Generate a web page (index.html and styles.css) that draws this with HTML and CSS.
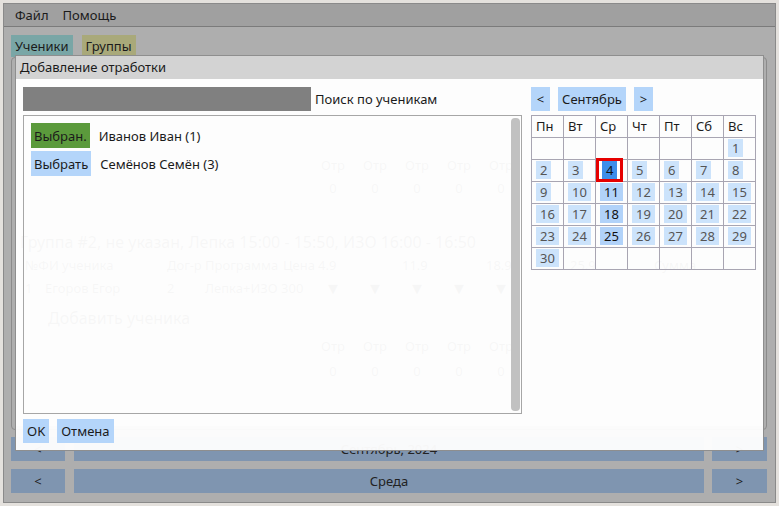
FILE: index.html
```html
<!DOCTYPE html>
<html lang="ru">
<head>
<meta charset="utf-8">
<title>Добавление отработки</title>
<link rel="stylesheet" href="styles.css">
</head>
<body>
<div class="window">
  <div class="menubar"><span>Файл</span><span>Помощь</span></div>
  <div class="main">
    <div class="tabs"><span class="tab tab-students">Ученики</span><span class="tab tab-groups">Группы</span></div>
    <div class="panel">
      <div class="ghost">
        <div class="grow g-r3 cells"><span>Отр</span><span>Отр</span><span>Отр</span><span>Отр</span><span>Отр</span></div>
        <div class="grow g-r4 cells"><span>0</span><span>0</span><span>0</span><span>0</span><span>0</span></div>
        <div class="grow g-r5 gtitle">Группа #2, не указан, Лепка 15:00 - 15:50, ИЗО 16:00 - 16:50</div>
        <div class="grow g-r6 ghead"><span>№ФИ ученика</span><span>Дог-р</span><span>Программа</span><span>Цена</span><span>4.9</span><span>11.9</span><span>18.9</span><span>25.9</span><span>Сумма</span></div>
        <div class="grow g-r7 gdata"><span>1</span><span>Егоров Егор</span><span>2</span><span>Лепка+ИЗО 300</span><span class="dd">▼</span><span class="dd">▼</span><span class="dd">▼</span><span class="dd">▼</span><span class="dd">▼</span></div>
        <div class="grow g-r8 gadd">Добавить ученика</div>
        <div class="grow g-r9 cells"><span>Отр</span><span>Отр</span><span>Отр</span><span>Отр</span><span>Отр</span></div>
        <div class="grow g-r10 cells"><span>0</span><span>0</span><span>0</span><span>0</span><span>0</span></div>
      </div>
    </div>
    <div class="navrow navrow-month">
      <div class="bar bar-left">&lt;</div>
      <div class="bar bar-mid">Сентябрь, 2024</div>
      <div class="bar bar-right">&gt;</div>
    </div>
    <div class="navrow navrow-day">
      <div class="bar bar-left">&lt;</div>
      <div class="bar bar-mid">Среда</div>
      <div class="bar bar-right">&gt;</div>
    </div>
  </div>

  <div class="dialog">
    <div class="dlg-title">Добавление отработки</div>
    <div class="dlg-body">
      <div class="dlg-top">
        <div class="left-col">
          <div class="search">
            <div class="search-input"></div>
            <span class="search-label">Поиск по ученикам</span>
          </div>
          <div class="list">
            <div class="items">
              <div class="item"><span class="btn btn-selected">Выбран.</span><span>Иванов Иван (1)</span></div>
              <div class="item"><span class="btn btn-select">Выбрать</span><span>Семёнов Семён (3)</span></div>
            </div>
            <div class="scrollbar"></div>
          </div>
        </div>
        <div class="right-col">
          <div class="cal-nav">
            <span class="btn cal-arrow">&lt;</span>
            <span class="btn cal-month">Сентябрь</span>
            <span class="btn cal-arrow">&gt;</span>
          </div>
          <div class="cal">
            <div class="ch">Пн</div><div class="ch">Вт</div><div class="ch">Ср</div><div class="ch">Чт</div><div class="ch">Пт</div><div class="ch">Сб</div><div class="ch">Вс</div>
            <div class="cd"></div><div class="cd"></div><div class="cd"></div><div class="cd"></div><div class="cd"></div><div class="cd"></div><div class="cd"><span class="day">1</span></div>
            <div class="cd"><span class="day">2</span></div><div class="cd"><span class="day">3</span></div><div class="cd"><span class="sel-frame"><span class="day day-sel">4</span></span></div><div class="cd"><span class="day">5</span></div><div class="cd"><span class="day">6</span></div><div class="cd"><span class="day">7</span></div><div class="cd"><span class="day">8</span></div>
            <div class="cd"><span class="day">9</span></div><div class="cd"><span class="day">10</span></div><div class="cd"><span class="day day-wed">11</span></div><div class="cd"><span class="day">12</span></div><div class="cd"><span class="day">13</span></div><div class="cd"><span class="day">14</span></div><div class="cd"><span class="day">15</span></div>
            <div class="cd"><span class="day">16</span></div><div class="cd"><span class="day">17</span></div><div class="cd"><span class="day day-wed">18</span></div><div class="cd"><span class="day">19</span></div><div class="cd"><span class="day">20</span></div><div class="cd"><span class="day">21</span></div><div class="cd"><span class="day">22</span></div>
            <div class="cd"><span class="day">23</span></div><div class="cd"><span class="day">24</span></div><div class="cd"><span class="day day-wed">25</span></div><div class="cd"><span class="day">26</span></div><div class="cd"><span class="day">27</span></div><div class="cd"><span class="day">28</span></div><div class="cd"><span class="day">29</span></div>
            <div class="cd"><span class="day">30</span></div><div class="cd"></div><div class="cd"></div><div class="cd"></div><div class="cd"></div><div class="cd"></div><div class="cd"></div>
          </div>
        </div>
      </div>
      <div class="dlg-buttons">
        <span class="btn btn-ok">OK</span>
        <span class="btn btn-cancel">Отмена</span>
      </div>
    </div>
  </div>
</div>
</body>
</html>
```

FILE: styles.css
```css
* { box-sizing: border-box; }
html, body { margin: 0; padding: 0; }
body {
  background: #e4e1dd;
  font-family: "Noto Sans", "DejaVu Sans", sans-serif;
  font-size: 13px;
  color: #1b1b1b;
}

.window {
  position: relative;
  margin: 3px;
  width: 773px;
  height: 500px;
  border: 1px solid #8a8a8a;
  background: #aeaeae;
  display: flex;
  flex-direction: column;
}

.menubar {
  height: 23px;
  flex: none;
  background: #a0a0a0;
  border-bottom: 1px solid #7b7b7b;
  display: flex;
  align-items: center;
  padding-left: 11px;
  gap: 14px;
}

.main {
  flex: 1;
  display: flex;
  flex-direction: column;
  padding: 8px 8px 9px 7px;
}

.tabs { display: flex; gap: 9px; height: 22px; flex: none; }
.tab { line-height: 22px; padding: 0 4px; }
.tab-students { background: #79a6a6; }
.tab-groups { background: #a9a97a; }

.panel {
  height: 373px;
  flex: none;
  border: 1px solid #8b8b8b;
  border-radius: 4px;
  padding: 3px;
  background: #aeaeae;
}
.ghost {
  height: 100%;
  background: #ffffff;
  color: #333;
  padding-left: 10px;
  overflow: hidden;
}
.grow { height: 20px; line-height: 20px; white-space: nowrap; }
.ghead { display: grid; grid-template-columns: 142px 38px 78px 35px 84px 84px 84px 84px 80px; }
.gdata { display: grid; grid-template-columns: 20px 122px 38px 107px repeat(5, 42px); }
.gdata .dd { text-align: center; }
.cells { display: flex; padding-left: 287px; }
.cells span { width: 42px; text-align: center; }
.gtitle { font-size: 16px; margin-left: -5px; }
.gadd { font-size: 16px; padding-left: 23px; }
.g-r3 { margin-top: 94px; }
.g-r4 { margin-top: 3px; }
.g-r5 { margin-top: 34px; }
.g-r6 { margin-top: 3px; }
.g-r7 { margin-top: 3px; }
.g-r8 { margin-top: 10px; }
.g-r9 { margin-top: 8px; }
.g-r10 { margin-top: 5px; }

.navrow { display: flex; height: 24px; flex: none; }
.navrow-month { margin-top: 7px; }
.navrow-day { margin-top: 8px; }
.bar {
  background: #7f95b0;
  color: #222;
  display: flex;
  align-items: center;
  justify-content: center;
}
.bar-left { width: 54px; }
.bar-mid { flex: 1; margin: 0 8px 0 9px; }
.bar-right { width: 55px; }

/* dialog overlay */
.dialog {
  position: absolute;
  left: 11px;
  top: 51px;
  width: 749px;
  height: 396px;
  border: 1px solid #8e8e8e;
  display: flex;
  flex-direction: column;
}
.dlg-title {
  height: 23px;
  flex: none;
  line-height: 23px;
  padding-left: 4px;
  background: #d3d3d3;
  color: #1b1b1b;
}
.dlg-body {
  flex: 1;
  background: rgba(253, 253, 253, 0.97);
  padding: 8px 7px 7px 7px;
  display: flex;
  flex-direction: column;
}
.dlg-top { display: flex; gap: 9px; height: 327px; flex: none; }

.left-col { width: 499px; display: flex; flex-direction: column; gap: 4px; }
.search { display: flex; align-items: center; height: 24px; flex: none; }
.search-input { width: 288px; height: 24px; background: #808080; }
.search-label { margin-left: 4px; }

.list {
  flex: 1;
  border: 1px solid #a6a6a6;
  display: flex;
}
.items { flex: 1; padding: 7px 0 0 7px; display: flex; flex-direction: column; gap: 3px; }
.item { display: flex; align-items: center; gap: 9px; height: 25px; }
.btn { display: inline-flex; align-items: center; justify-content: center; padding: 0 3px; }
.item .btn { height: 25px; }
.btn-selected { background: #5b9a3c; }
.btn-select { background: #b4d5fa; }
.scrollbar {
  width: 9px;
  margin: 2px 1px 2px 0;
  background: #c1c1c1;
  border-radius: 4px;
}

.dlg-buttons { display: flex; gap: 8px; height: 24px; margin-top: 5px; flex: none; }
.dlg-buttons .btn { background: #b4d5fa; height: 24px; padding: 0 4px; }

.right-col { width: 225px; display: flex; flex-direction: column; gap: 4px; }
.cal-nav { display: flex; gap: 8px; height: 24px; flex: none; }
.cal-nav .btn { background: #b4d5fa; height: 24px; }
.cal-arrow { width: 19px; }
.cal-month { width: 68px; }

.cal {
  display: grid;
  grid-template-columns: repeat(7, 32px);
  grid-auto-rows: 22px;
  width: 225px;
  border-top: 1px solid #a8a5b2;
  border-left: 1px solid #a8a5b2;
}
.ch, .cd {
  border-right: 1px solid #a8a5b2;
  border-bottom: 1px solid #a8a5b2;
}
.ch { padding-left: 4px; line-height: 21px; color: #1b1b1b; }
.cd { padding: 1px 0 0 4px; }
.day {
  display: inline-block;
  height: 18px;
  line-height: 18px;
  padding: 0 4px;
  background: #cce3fb;
  color: #555;
  vertical-align: top;
}
.day-wed { background: #b1d2f9; color: #111; }
.sel-frame {
  display: inline-block;
  border: 3px solid #e60000;
  padding: 0 3px;
  margin: -3px 0 0 -4px;
  vertical-align: top;
  background: #fff;
}
.day-sel { background: #3d8eea; color: #111; }
```
